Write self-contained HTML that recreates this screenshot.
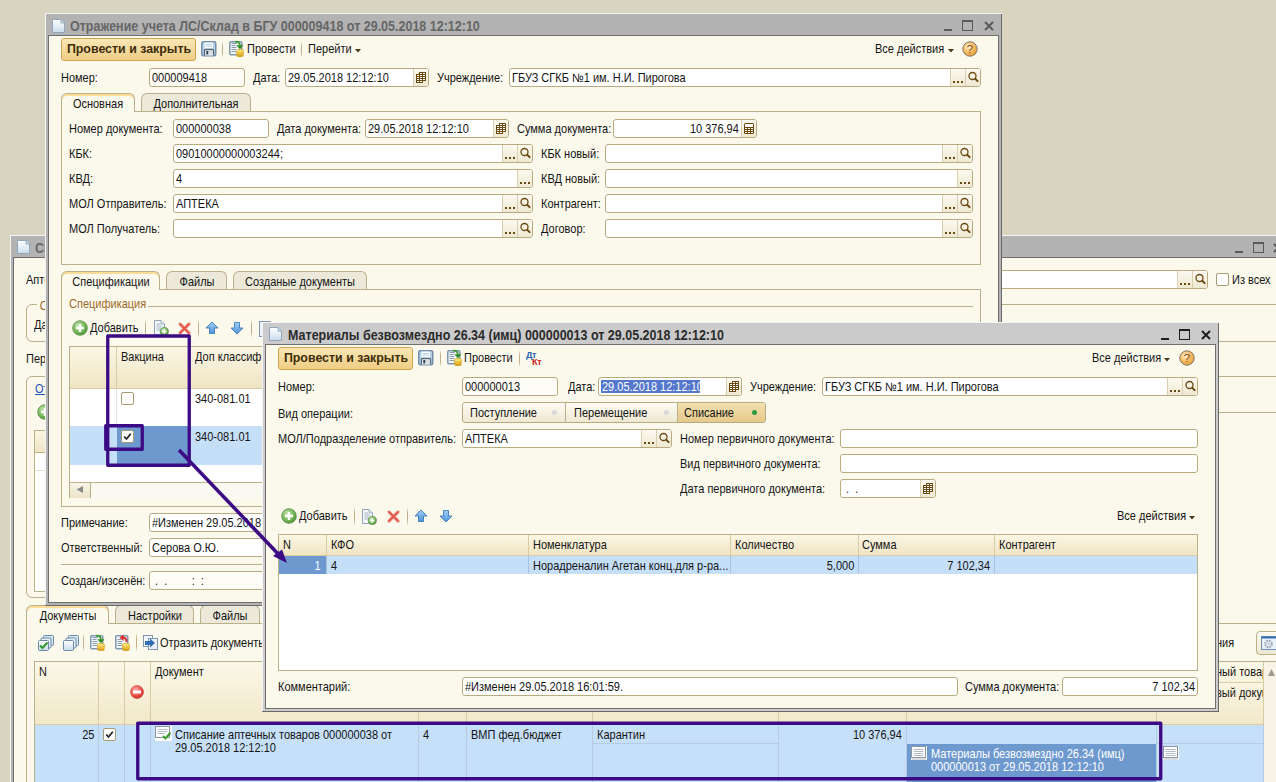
<!DOCTYPE html><html><head><meta charset="utf-8"><style>
*{margin:0;padding:0;box-sizing:content-box}
html,body{width:1276px;height:782px;overflow:hidden}
body{position:relative;background:#d9d4bf;font-family:"Liberation Sans",sans-serif;font-size:11px;color:#141414}
div,span,svg{position:absolute}
.t{line-height:13px;white-space:nowrap}
.fld{border:1px solid #b9ab80;border-radius:3px}
.fb{border-left:1px solid #d9cfae;background:linear-gradient(#fbf9f0,#efe9d3);height:17px}
.tab{border:1px solid #bab08a;border-bottom:none;border-radius:6px 6px 0 0;background:#ece9da}
.tab.act{background:#fbf9ec;box-shadow:inset 0 2px #fbdc98}
.pbtn{border:1px solid #cfa650;border-radius:3px;background:linear-gradient(#f9e7b6,#efcd84)}
.cb{width:11px;height:11px;border:1px solid #a89a72;border-radius:2px;background:#fff}
.radio{border:1px solid #b9ab80;border-radius:3px;background:linear-gradient(#fdfbf3,#eee8d2)}
.dot{width:5px;height:5px;border-radius:50%;background:#d8d8d8}
</style></head><body><svg width="0" height="0" style="position:absolute"><defs><linearGradient id="docg" x1="0" y1="0" x2="0" y2="1"><stop offset="0" stop-color="#ffffff"/><stop offset="1" stop-color="#c9dcec"/></linearGradient><radialGradient id="helpg" cx="0.4" cy="0.35" r="0.7"><stop offset="0" stop-color="#fff1d0"/><stop offset="0.6" stop-color="#f4b75a"/><stop offset="1" stop-color="#e39a3a"/></radialGradient><radialGradient id="addg" cx="0.4" cy="0.35" r="0.7"><stop offset="0" stop-color="#c8e8b0"/><stop offset="0.7" stop-color="#6cb04e"/><stop offset="1" stop-color="#4d8f37"/></radialGradient><radialGradient id="redg" cx="0.4" cy="0.35" r="0.7"><stop offset="0" stop-color="#ffb0a8"/><stop offset="0.7" stop-color="#e2463c"/><stop offset="1" stop-color="#c8302a"/></radialGradient><linearGradient id="arrg" x1="0" y1="0" x2="0" y2="1"><stop offset="0" stop-color="#9fd0f5"/><stop offset="1" stop-color="#4f93d9"/></linearGradient></defs></svg><div style="left:10px;top:235px;width:1291px;height:566px;background:#b3b3b3"></div>
<div style="left:10px;top:235px;width:1291px;height:1px;background:#f4f4f4"></div>
<div style="left:10px;top:235px;width:1px;height:566px;background:#f4f4f4"></div>
<div style="left:1300px;top:236px;width:1px;height:565px;background:#6a6a6a"></div>
<div style="left:10px;top:800px;width:1291px;height:1px;background:#6a6a6a"></div>
<div style="left:13px;top:257px;width:1285px;height:541px;background:#6f6f6f"></div>
<div style="left:14px;top:258px;width:1283px;height:539px;background:#fbf9ec"></div>
<svg style="left:17px;top:240px" width="13" height="14"><path d="M0.5 0.5 H9 L12.5 4 V13.5 H0.5 Z" fill="url(#docg)" stroke="#8fa6bd" stroke-width="1"/><path d="M9 0.5 V4 H12.5" fill="#cfe0ee" stroke="#8fa6bd" stroke-width="1"/></svg>
<span class="t" style="left:34.5px;top:242.36px;font-size:13.75px;line-height:13.75px;transform:scaleX(0.9091);transform-origin:0 0;font-weight:bold;color:#686868">Списание аптечных товаров</span>
<div style="left:1235px;top:251px;width:8px;height:2px;background:#5a5a5a"></div>
<div style="left:1253px;top:242px;width:9px;height:8px;border:1px solid #5a5a5a;border-top-width:2px"></div>
<svg style="left:1273px;top:243px" width="10" height="10"><path d="M1 1 L9 9 M9 1 L1 9" stroke="#5a5a5a" stroke-width="2"/></svg>
<span class="t" style="left:26px;top:273.76px;font-size:12.10px;line-height:12.10px;transform:scaleX(0.9091);transform-origin:0 0;">Аптека:</span>
<div class="fld" style="left:900px;top:270px;width:306px;height:17px;background:#fff"></div>
<div class="fb" style="left:1192px;top:271px;width:14px;height:17px;border-radius:0 2px 2px 0;"></div>
<svg style="left:1193px;top:271px" width="15" height="17"><circle cx="6.5" cy="7" r="3.5" fill="none" stroke="#6b4a12" stroke-width="1.3"/><path d="M9.2 9.7 L11.6 12.1" stroke="#6b4a12" stroke-width="2" stroke-linecap="round"/></svg>
<div class="fb" style="left:1177px;top:271px;width:14px;height:17px;"></div>
<div style="left:1180px;top:283px;width:2px;height:2px;background:#6b4a12;box-shadow:4px 0 #6b4a12,8px 0 #6b4a12"></div>
<div class="cb" style="left:1216px;top:273px"></div>
<span class="t" style="left:1232px;top:273.76px;font-size:12.10px;line-height:12.10px;transform:scaleX(0.9091);transform-origin:0 0;">Из всех</span>
<div style="left:26px;top:304px;width:1400px;height:36px;border:1px solid #bab08a;border-radius:6px"></div>
<span class="t" style="left:37px;top:299.76px;font-size:12.10px;line-height:12.10px;transform:scaleX(0.9091);transform-origin:0 0;color:#9b6a2b;background:#fbf9ec;padding:0 3px">Отбор</span>
<span class="t" style="left:34px;top:318.76px;font-size:12.10px;line-height:12.10px;transform:scaleX(0.9091);transform-origin:0 0;">Дата:</span>
<div style="left:1219px;top:341px;width:58px;height:1px;background:#bab08a"></div>
<span class="t" style="left:26px;top:352.76px;font-size:12.10px;line-height:12.10px;transform:scaleX(0.9091);transform-origin:0 0;">Период:</span>
<div style="left:26px;top:376px;width:1120px;height:220px;border:1px solid #bab08a;border-radius:6px"></div>
<div style="left:1219px;top:376px;width:58px;height:1px;background:#bab08a"></div>
<div style="left:1219px;top:412px;width:58px;height:1px;background:#bab08a"></div>
<span class="t" style="left:35px;top:382.76px;font-size:12.10px;line-height:12.10px;transform:scaleX(0.9091);transform-origin:0 0;color:#1f4fb8;text-decoration:underline">Отразить</span>
<svg style="left:37px;top:404px" width="16" height="16"><circle cx="8" cy="8" r="7.3" fill="url(#addg)" stroke="#5c8a4a" stroke-width="0.8"/><path d="M8 4 V12 M4 8 H12" stroke="#fff" stroke-width="2.4"/></svg>
<div style="left:34px;top:430px;width:1100px;height:160px;background:#fff;border:1px solid #bab08a"></div>
<div style="left:35px;top:431px;width:1100px;height:21px;background:linear-gradient(#fbf6e4,#efe5c4)"></div>
<div style="left:35px;top:452px;width:1096px;height:1px;background:#bab08a"></div>
<div style="left:35px;top:470px;width:1096px;height:1px;background:#e6e0cc"></div>
<div style="left:26px;top:623px;width:1400px;height:300px;border:1px solid #bab08a"></div>
<div class="tab act" style="left:26px;top:605px;width:81px;height:18px"></div>
<span class="t" style="left:67.5px;top:609.76px;font-size:12.10px;line-height:12.10px;transform:scaleX(0.9091) translateX(-50%);transform-origin:0 0;">Документы</span>
<div class="tab" style="left:115px;top:605px;width:77px;height:17px"></div>
<span class="t" style="left:154.5px;top:609.76px;font-size:12.10px;line-height:12.10px;transform:scaleX(0.9091) translateX(-50%);transform-origin:0 0;">Настройки</span>
<div class="tab" style="left:200px;top:605px;width:58px;height:17px"></div>
<span class="t" style="left:230.0px;top:609.76px;font-size:12.10px;line-height:12.10px;transform:scaleX(0.9091) translateX(-50%);transform-origin:0 0;">Файлы</span>
<svg style="left:38px;top:635px" width="16" height="16"><rect x="5.5" y="0.5" width="10" height="10" rx="1" fill="#d7e6f3" stroke="#6c8aa8"/><rect x="3" y="3" width="10" height="10" rx="1" fill="#e3eef8" stroke="#6c8aa8"/><rect x="0.5" y="5.5" width="10" height="10" rx="1" fill="url(#docg)" stroke="#6c8aa8"/><path d="M2 10.5 L4.5 13 L9.5 7.5" fill="none" stroke="#2f9a2a" stroke-width="2"/></svg>
<svg style="left:63px;top:635px" width="16" height="16"><rect x="5.5" y="0.5" width="10" height="10" rx="1" fill="#d7e6f3" stroke="#6c8aa8"/><rect x="3" y="3" width="10" height="10" rx="1" fill="#e3eef8" stroke="#6c8aa8"/><rect x="0.5" y="5.5" width="10" height="10" rx="1" fill="url(#docg)" stroke="#6c8aa8"/></svg>
<div style="left:83px;top:633px;width:1px;height:19px;background:linear-gradient(#fbf9ec,#bdb08a 30%,#bdb08a 70%,#fbf9ec)"></div>
<svg style="left:89px;top:634px" width="17" height="18"><rect x="1.75" y="1.75" width="12" height="13" rx="1" fill="#f1f6fb" stroke="#8199b0" stroke-width="1.5"/><path d="M3.5 3.5 H9 M3.5 5.5 H7.5 M3.5 7.5 H8.5 M3.5 9.5 H8 M3.5 11.5 H8" stroke="#8a9cad" stroke-width="1"/><path d="M7 1.8 C10 1 11.5 2.5 12 5.5" fill="none" stroke="#3f9a2f" stroke-width="1.8"/><path d="M8.3 5.3 H15.5 L11.9 9.2Z" fill="#2e8a22"/><ellipse cx="12" cy="15.2" rx="3.7" ry="1.9" fill="#dba42a"/><ellipse cx="12" cy="13.2" rx="3.7" ry="1.9" fill="#f2cd45" stroke="#d19a20" stroke-width="0.6"/><ellipse cx="12" cy="11.2" rx="3.7" ry="1.9" fill="#f8e06a" stroke="#d19a20" stroke-width="0.6"/></svg>
<svg style="left:114px;top:634px" width="17" height="18"><rect x="1.75" y="1.75" width="12" height="13" rx="1" fill="#f1f6fb" stroke="#8199b0" stroke-width="1.5"/><path d="M3.5 5.5 H7.5 M3.5 7.5 H8.5 M3.5 9.5 H8 M3.5 11.5 H8" stroke="#8a9cad" stroke-width="1"/><path d="M12.5 8 C12.5 5 11 3.5 8.5 3.5" fill="none" stroke="#d8302a" stroke-width="1.9"/><path d="M9.5 0.5 V7 L5.5 3.7Z" fill="#d8302a"/><ellipse cx="12" cy="15.2" rx="3.7" ry="1.9" fill="#dba42a"/><ellipse cx="12" cy="13.2" rx="3.7" ry="1.9" fill="#f2cd45" stroke="#d19a20" stroke-width="0.6"/><ellipse cx="12" cy="11.2" rx="3.7" ry="1.9" fill="#f8e06a" stroke="#d19a20" stroke-width="0.6"/></svg>
<div style="left:136px;top:633px;width:1px;height:19px;background:linear-gradient(#fbf9ec,#bdb08a 30%,#bdb08a 70%,#fbf9ec)"></div>
<svg style="left:143px;top:635px" width="16" height="16"><rect x="0.5" y="0.5" width="9" height="11" fill="#f3f7fb" stroke="#7f97ae"/><rect x="5.5" y="3.5" width="9" height="11" fill="#e9f0f7" stroke="#7f97ae"/><path d="M2 6 H7 V3.5 L12 8 L7 12.5 V10 H2Z" fill="#2f6db5"/></svg>
<span class="t" style="left:160px;top:636.76px;font-size:12.10px;line-height:12.10px;transform:scaleX(0.9091);transform-origin:0 0;">Отразить документы</span>
<span class="t" style="left:1216px;top:636.76px;font-size:12.10px;line-height:12.10px;transform:scaleX(0.9091);transform-origin:0 0;">ния</span>
<div style="left:1256px;top:631px;width:40px;height:22px;border:1px solid #bab08a;border-radius:4px;background:linear-gradient(#fdfbf2,#efe8d0)"></div>
<svg style="left:1261px;top:636px" width="16" height="14"><rect x="0.5" y="0.5" width="15" height="13" fill="#e9f2fb" stroke="#6f8fb5"/><rect x="0.5" y="0.5" width="15" height="2" fill="#3a6fb0"/><circle cx="7.5" cy="8" r="3.3" fill="none" stroke="#9aa3ad" stroke-width="2" stroke-dasharray="1.6 1"/><circle cx="7.5" cy="8" r="1.3" fill="#c8ced6"/></svg>
<div style="left:34px;top:661px;width:1300px;height:200px;background:#fff;border-top:1px solid #bab08a;border-left:1px solid #bab08a"></div>
<div style="left:35px;top:662px;width:1300px;height:62px;background:linear-gradient(#fcf8e8,#f1e8c9)"></div>
<div style="left:98px;top:662px;width:1px;height:121px;background:#d8cca6"></div>
<div style="left:124px;top:662px;width:1px;height:121px;background:#d8cca6"></div>
<div style="left:150px;top:662px;width:1px;height:121px;background:#d8cca6"></div>
<div style="left:418px;top:662px;width:1px;height:121px;background:#d8cca6"></div>
<div style="left:466px;top:662px;width:1px;height:121px;background:#d8cca6"></div>
<div style="left:592px;top:662px;width:1px;height:121px;background:#d8cca6"></div>
<div style="left:778px;top:662px;width:1px;height:121px;background:#d8cca6"></div>
<div style="left:906px;top:662px;width:1px;height:121px;background:#d8cca6"></div>
<div style="left:1156px;top:662px;width:1px;height:121px;background:#d8cca6"></div>
<div style="left:1263px;top:662px;width:1px;height:121px;background:#d8cca6"></div>
<div style="left:1264px;top:662px;width:20px;height:120px;background:#f7f4e7"></div>
<svg style="left:1267px;top:668px" width="9" height="9"><path d="M4.5 1 L8 8 H1Z" fill="#a09a8a"/></svg>
<div style="left:1157px;top:682px;width:107px;height:1px;background:#d8cca6"></div>
<div style="left:1157px;top:683px;width:106px;height:41px;background:linear-gradient(#faf5e3,#f1e8c9)"></div>
<span class="t" style="left:39px;top:665.76px;font-size:12.10px;line-height:12.10px;transform:scaleX(0.9091);transform-origin:0 0;">N</span>
<span class="t" style="left:155px;top:665.76px;font-size:12.10px;line-height:12.10px;transform:scaleX(0.9091);transform-origin:0 0;">Документ</span>
<svg style="left:130px;top:685px" width="14" height="14"><circle cx="7" cy="7" r="6.5" fill="url(#redg)" stroke="#c44" stroke-width="0.6"/><rect x="3" y="5.5" width="8" height="3" fill="#fff"/></svg>
<div style="left:1157px;top:662px;width:106px;height:60px;overflow:hidden"><span class="t" style="left:59px;top:3.76px;font-size:12.1px;line-height:12.1px;transform:scaleX(0.9091);transform-origin:0 0">ный товар</span><span class="t" style="left:59px;top:24.76px;font-size:12.1px;line-height:12.1px;transform:scaleX(0.9091);transform-origin:0 0">вый документ</span></div>
<div style="left:35px;top:724px;width:1228px;height:1px;background:#d8cca6"></div>
<div style="left:35px;top:725px;width:1228px;height:60px;background:#c7e0fa"></div>
<div style="left:98px;top:725px;width:1px;height:58px;background:#b4cbe3"></div>
<div style="left:124px;top:725px;width:1px;height:58px;background:#b4cbe3"></div>
<div style="left:150px;top:725px;width:1px;height:58px;background:#b4cbe3"></div>
<div style="left:418px;top:725px;width:1px;height:58px;background:#b4cbe3"></div>
<div style="left:466px;top:725px;width:1px;height:58px;background:#b4cbe3"></div>
<div style="left:592px;top:725px;width:1px;height:58px;background:#b4cbe3"></div>
<div style="left:778px;top:725px;width:1px;height:58px;background:#b4cbe3"></div>
<div style="left:906px;top:725px;width:1px;height:58px;background:#b4cbe3"></div>
<div style="left:1156px;top:725px;width:1px;height:58px;background:#b4cbe3"></div>
<div style="left:1263px;top:725px;width:1px;height:58px;background:#b4cbe3"></div>
<div style="left:592px;top:743px;width:187px;height:1px;background:#b4cbe3"></div>
<div style="left:1157px;top:743px;width:107px;height:1px;background:#b4cbe3"></div>
<span class="t" style="right:1182px;top:728.76px;font-size:12.10px;line-height:12.10px;transform:scaleX(0.9091);transform-origin:100% 0;">25</span>
<div class="cb" style="left:103px;top:728px"></div>
<svg style="left:103px;top:728px" width="13" height="13"><path d="M3.2 6.5 L5.5 9 L9.8 3.8" fill="none" stroke="#222" stroke-width="1.8"/></svg>
<svg style="left:155px;top:726px" width="17" height="15"><rect x="0" y="0" width="17" height="15" fill="#fff"/><rect x="0.5" y="0.5" width="14" height="11" fill="#fff" stroke="#8a97a3"/><path d="M2.5 3.5 H12.5 M2.5 5.5 H12.5 M2.5 7.5 H10" stroke="#a8b3bd" stroke-width="0.9"/><path d="M8 10 L10.5 12.5 L15.5 6.5" fill="none" stroke="#39a02f" stroke-width="2"/></svg>
<span class="t" style="left:175px;top:728.76px;font-size:12.10px;line-height:12.10px;transform:scaleX(0.9091);transform-origin:0 0;">Списание аптечных товаров 000000038 от</span>
<span class="t" style="left:175px;top:741.76px;font-size:12.10px;line-height:12.10px;transform:scaleX(0.9091);transform-origin:0 0;">29.05.2018 12:12:10</span>
<span class="t" style="left:423px;top:728.76px;font-size:12.10px;line-height:12.10px;transform:scaleX(0.9091);transform-origin:0 0;">4</span>
<span class="t" style="left:471px;top:728.76px;font-size:12.10px;line-height:12.10px;transform:scaleX(0.9091);transform-origin:0 0;">ВМП фед.бюджет</span>
<span class="t" style="left:597px;top:728.76px;font-size:12.10px;line-height:12.10px;transform:scaleX(0.9091);transform-origin:0 0;">Карантин</span>
<span class="t" style="right:374px;top:728.76px;font-size:12.10px;line-height:12.10px;transform:scaleX(0.9091);transform-origin:100% 0;">10 376,94</span>
<div style="left:907px;top:744px;width:249px;height:40px;background:#6e99cf"></div>
<svg style="left:911px;top:746px" width="16" height="14"><rect x="0" y="0" width="16" height="14" fill="#fff"/><rect x="0.5" y="0.5" width="14" height="11" fill="#fff" stroke="#8a97a3"/><path d="M2.5 3.5 H12.5 M2.5 5.5 H12.5 M2.5 7.5 H12.5 M2.5 9.5 H12.5" stroke="#a8b3bd" stroke-width="0.9"/><rect x="1" y="12" width="14" height="2" fill="#d9dde2"/></svg>
<span class="t" style="left:931px;top:747.76px;font-size:12.10px;line-height:12.10px;transform:scaleX(0.9091);transform-origin:0 0;color:#fff">Материалы безвозмездно 26.34 (имц)</span>
<span class="t" style="left:931px;top:760.76px;font-size:12.10px;line-height:12.10px;transform:scaleX(0.9091);transform-origin:0 0;color:#fff">000000013 от 29.05.2018 12:12:10</span>
<svg style="left:1163px;top:746px" width="16" height="14"><rect x="0" y="0" width="16" height="14" fill="#fff"/><rect x="0.5" y="0.5" width="14" height="11" fill="#fff" stroke="#8a97a3"/><path d="M2.5 3.5 H12.5 M2.5 5.5 H12.5 M2.5 7.5 H12.5 M2.5 9.5 H12.5" stroke="#a8b3bd" stroke-width="0.9"/><rect x="1" y="12" width="14" height="2" fill="#d9dde2"/></svg>
<div style="left:45px;top:13px;width:957px;height:593px;background:#b3b3b3"></div>
<div style="left:45px;top:13px;width:957px;height:1px;background:#f4f4f4"></div>
<div style="left:45px;top:13px;width:1px;height:593px;background:#f4f4f4"></div>
<div style="left:1001px;top:14px;width:1px;height:592px;background:#6a6a6a"></div>
<div style="left:45px;top:605px;width:957px;height:1px;background:#6a6a6a"></div>
<div style="left:48px;top:35px;width:951px;height:568px;background:#6f6f6f"></div>
<div style="left:49px;top:36px;width:949px;height:566px;background:#fbf9ec"></div>
<svg style="left:52px;top:19px" width="13" height="14"><path d="M0.5 0.5 H9 L12.5 4 V13.5 H0.5 Z" fill="url(#docg)" stroke="#8fa6bd" stroke-width="1"/><path d="M9 0.5 V4 H12.5" fill="#cfe0ee" stroke="#8fa6bd" stroke-width="1"/></svg>
<span class="t" style="left:70px;top:20.36px;font-size:13.75px;line-height:13.75px;transform:scaleX(0.9091);transform-origin:0 0;font-weight:bold;color:#666">Отражение учета ЛС/Склад в БГУ 000009418 от 29.05.2018 12:12:10</span>
<div style="left:944px;top:29px;width:8px;height:2px;background:#5a5a5a"></div>
<div style="left:962px;top:20px;width:9px;height:8px;border:1px solid #5a5a5a;border-top-width:2px"></div>
<svg style="left:984px;top:21px" width="10" height="10"><path d="M1 1 L9 9 M9 1 L1 9" stroke="#5a5a5a" stroke-width="2"/></svg>
<div class="pbtn" style="left:61px;top:38px;width:133px;height:21px"></div>
<span class="t" style="left:128.5px;top:41.85px;font-size:13.64px;line-height:13.64px;transform:scaleX(0.9091) translateX(-50%);transform-origin:0 0;font-weight:bold;color:#3d2d0a">Провести и закрыть</span>
<svg style="left:201px;top:41px" width="16" height="16"><rect x="0.75" y="0.75" width="14" height="14" rx="1.5" fill="#b5d0e6" stroke="#7590aa" stroke-width="1.5"/><rect x="3.5" y="1.5" width="8.5" height="6" fill="#fdfeff"/><path d="M4.5 3.5 H11 M4.5 5.3 H11" stroke="#a5cddc" stroke-width="0.9"/><path d="M3.5 14.5 V9.5 Q3.5 8.5 4.5 8.5 H11.5 Q12.5 8.5 12.5 9.5 V14.5" fill="#f2f4f6" stroke="#55687a" stroke-width="1.3"/><rect x="5.3" y="10" width="2" height="3.5" fill="#2f3f50"/><rect x="8" y="10" width="3.5" height="3.5" fill="#d8dde2"/></svg>
<div style="left:222px;top:41px;width:1px;height:17px;background:linear-gradient(#fbf9ec,#bdb08a 30%,#bdb08a 70%,#fbf9ec)"></div>
<svg style="left:228px;top:40px" width="17" height="18"><rect x="1.75" y="1.75" width="12" height="13" rx="1" fill="#f1f6fb" stroke="#8199b0" stroke-width="1.5"/><path d="M3.5 3.5 H9 M3.5 5.5 H7.5 M3.5 7.5 H8.5 M3.5 9.5 H8 M3.5 11.5 H8" stroke="#8a9cad" stroke-width="1"/><path d="M7 1.8 C10 1 11.5 2.5 12 5.5" fill="none" stroke="#3f9a2f" stroke-width="1.8"/><path d="M8.3 5.3 H15.5 L11.9 9.2Z" fill="#2e8a22"/><ellipse cx="12" cy="15.2" rx="3.7" ry="1.9" fill="#dba42a"/><ellipse cx="12" cy="13.2" rx="3.7" ry="1.9" fill="#f2cd45" stroke="#d19a20" stroke-width="0.6"/><ellipse cx="12" cy="11.2" rx="3.7" ry="1.9" fill="#f8e06a" stroke="#d19a20" stroke-width="0.6"/></svg>
<span class="t" style="left:247px;top:42.76px;font-size:12.10px;line-height:12.10px;transform:scaleX(0.9091);transform-origin:0 0;">Провести</span>
<div style="left:301px;top:41px;width:1px;height:17px;background:linear-gradient(#fbf9ec,#bdb08a 30%,#bdb08a 70%,#fbf9ec)"></div>
<span class="t" style="left:308px;top:42.76px;font-size:12.10px;line-height:12.10px;transform:scaleX(0.9091);transform-origin:0 0;">Перейти</span>
<svg style="left:355px;top:49px" width="6" height="4"><path d="M0 0 H6 L3 3.5Z" fill="#4a3a18"/></svg>
<span class="t" style="left:875px;top:42.76px;font-size:12.10px;line-height:12.10px;transform:scaleX(0.9091);transform-origin:0 0;">Все действия</span>
<svg style="left:948px;top:49px" width="6" height="4"><path d="M0 0 H6 L3 3.5Z" fill="#4a3a18"/></svg>
<svg style="left:962px;top:41px" width="16" height="16"><circle cx="8" cy="8" r="7.2" fill="url(#helpg)" stroke="#857565" stroke-width="1"/><text x="8" y="12" text-anchor="middle" font-family="Liberation Sans" font-size="11.5" fill="#7a4424">?</text></svg>
<span class="t" style="left:61px;top:71.76px;font-size:12.10px;line-height:12.10px;transform:scaleX(0.9091);transform-origin:0 0;">Номер:</span>
<div class="fld" style="left:149px;top:68px;width:94px;height:17px;background:#fdfcf6"></div>
<span class="t" style="left:152px;top:71.76px;font-size:12.10px;line-height:12.10px;transform:scaleX(0.9091);transform-origin:0 0;">000009418</span>
<span class="t" style="left:253px;top:71.76px;font-size:12.10px;line-height:12.10px;transform:scaleX(0.9091);transform-origin:0 0;">Дата:</span>
<div class="fld" style="left:285px;top:68px;width:142px;height:17px;background:#fff"></div>
<div class="fb" style="left:413px;top:69px;width:14px;height:17px;border-radius:0 2px 2px 0;"></div>
<svg style="left:416px;top:72px" width="10" height="11" shape-rendering="crispEdges"><rect x="3" y="0" width="4" height="3" fill="#6b4a12"/><rect x="6" y="0" width="4" height="3" fill="#6b4a12"/><rect x="0" y="2" width="4" height="3" fill="#6b4a12"/><rect x="3" y="2" width="4" height="3" fill="#6b4a12"/><rect x="6" y="2" width="4" height="3" fill="#6b4a12"/><rect x="0" y="4" width="4" height="3" fill="#6b4a12"/><rect x="3" y="4" width="4" height="3" fill="#6b4a12"/><rect x="6" y="4" width="4" height="3" fill="#6b4a12"/><rect x="0" y="6" width="4" height="3" fill="#6b4a12"/><rect x="3" y="6" width="4" height="3" fill="#6b4a12"/><rect x="6" y="6" width="4" height="3" fill="#6b4a12"/><rect x="0" y="8" width="4" height="3" fill="#6b4a12"/><rect x="3" y="8" width="4" height="3" fill="#6b4a12"/><rect x="4" y="1" width="2" height="1" fill="#fff"/><rect x="7" y="1" width="2" height="1" fill="#fff"/><rect x="1" y="3" width="2" height="1" fill="#fff"/><rect x="4" y="3" width="2" height="1" fill="#fff"/><rect x="7" y="3" width="2" height="1" fill="#fff"/><rect x="1" y="5" width="2" height="1" fill="#fff"/><rect x="4" y="5" width="2" height="1" fill="#fff"/><rect x="7" y="5" width="2" height="1" fill="#fff"/><rect x="1" y="7" width="2" height="1" fill="#fff"/><rect x="4" y="7" width="2" height="1" fill="#fff"/><rect x="7" y="7" width="2" height="1" fill="#fff"/><rect x="1" y="9" width="2" height="1" fill="#fff"/><rect x="4" y="9" width="2" height="1" fill="#fff"/></svg>
<span class="t" style="left:288px;top:71.76px;font-size:12.10px;line-height:12.10px;transform:scaleX(0.9091);transform-origin:0 0;">29.05.2018 12:12:10</span>
<span class="t" style="left:437px;top:71.76px;font-size:12.10px;line-height:12.10px;transform:scaleX(0.9091);transform-origin:0 0;">Учреждение:</span>
<div class="fld" style="left:509px;top:68px;width:470px;height:17px;background:#fff"></div>
<div class="fb" style="left:965px;top:69px;width:14px;height:17px;border-radius:0 2px 2px 0;"></div>
<svg style="left:966px;top:69px" width="15" height="17"><circle cx="6.5" cy="7" r="3.5" fill="none" stroke="#6b4a12" stroke-width="1.3"/><path d="M9.2 9.7 L11.6 12.1" stroke="#6b4a12" stroke-width="2" stroke-linecap="round"/></svg>
<div class="fb" style="left:950px;top:69px;width:14px;height:17px;"></div>
<div style="left:953px;top:81px;width:2px;height:2px;background:#6b4a12;box-shadow:4px 0 #6b4a12,8px 0 #6b4a12"></div>
<span class="t" style="left:512px;top:71.76px;font-size:12.10px;line-height:12.10px;transform:scaleX(0.9091);transform-origin:0 0;">ГБУЗ СГКБ №1 им. Н.И. Пирогова</span>
<div style="left:61px;top:111px;width:918px;height:152px;border:1px solid #bab08a"></div>
<div class="tab act" style="left:61px;top:93px;width:72px;height:18px"></div>
<span class="t" style="left:98.0px;top:97.76px;font-size:12.10px;line-height:12.10px;transform:scaleX(0.9091) translateX(-50%);transform-origin:0 0;">Основная</span>
<div class="tab" style="left:141px;top:93px;width:108px;height:17px"></div>
<span class="t" style="left:196.0px;top:97.76px;font-size:12.10px;line-height:12.10px;transform:scaleX(0.9091) translateX(-50%);transform-origin:0 0;">Дополнительная</span>
<span class="t" style="left:69px;top:122.76px;font-size:12.10px;line-height:12.10px;transform:scaleX(0.9091);transform-origin:0 0;">Номер документа:</span>
<div class="fld" style="left:173px;top:119px;width:94px;height:17px;background:#fff"></div>
<span class="t" style="left:176px;top:122.76px;font-size:12.10px;line-height:12.10px;transform:scaleX(0.9091);transform-origin:0 0;">000000038</span>
<span class="t" style="left:277px;top:122.76px;font-size:12.10px;line-height:12.10px;transform:scaleX(0.9091);transform-origin:0 0;">Дата документа:</span>
<div class="fld" style="left:365px;top:119px;width:142px;height:17px;background:#fff"></div>
<div class="fb" style="left:493px;top:120px;width:14px;height:17px;border-radius:0 2px 2px 0;"></div>
<svg style="left:496px;top:123px" width="10" height="11" shape-rendering="crispEdges"><rect x="3" y="0" width="4" height="3" fill="#6b4a12"/><rect x="6" y="0" width="4" height="3" fill="#6b4a12"/><rect x="0" y="2" width="4" height="3" fill="#6b4a12"/><rect x="3" y="2" width="4" height="3" fill="#6b4a12"/><rect x="6" y="2" width="4" height="3" fill="#6b4a12"/><rect x="0" y="4" width="4" height="3" fill="#6b4a12"/><rect x="3" y="4" width="4" height="3" fill="#6b4a12"/><rect x="6" y="4" width="4" height="3" fill="#6b4a12"/><rect x="0" y="6" width="4" height="3" fill="#6b4a12"/><rect x="3" y="6" width="4" height="3" fill="#6b4a12"/><rect x="6" y="6" width="4" height="3" fill="#6b4a12"/><rect x="0" y="8" width="4" height="3" fill="#6b4a12"/><rect x="3" y="8" width="4" height="3" fill="#6b4a12"/><rect x="4" y="1" width="2" height="1" fill="#fff"/><rect x="7" y="1" width="2" height="1" fill="#fff"/><rect x="1" y="3" width="2" height="1" fill="#fff"/><rect x="4" y="3" width="2" height="1" fill="#fff"/><rect x="7" y="3" width="2" height="1" fill="#fff"/><rect x="1" y="5" width="2" height="1" fill="#fff"/><rect x="4" y="5" width="2" height="1" fill="#fff"/><rect x="7" y="5" width="2" height="1" fill="#fff"/><rect x="1" y="7" width="2" height="1" fill="#fff"/><rect x="4" y="7" width="2" height="1" fill="#fff"/><rect x="7" y="7" width="2" height="1" fill="#fff"/><rect x="1" y="9" width="2" height="1" fill="#fff"/><rect x="4" y="9" width="2" height="1" fill="#fff"/></svg>
<span class="t" style="left:368px;top:122.76px;font-size:12.10px;line-height:12.10px;transform:scaleX(0.9091);transform-origin:0 0;">29.05.2018 12:12:10</span>
<span class="t" style="left:517px;top:122.76px;font-size:12.10px;line-height:12.10px;transform:scaleX(0.9091);transform-origin:0 0;">Сумма документа:</span>
<div class="fld" style="left:613px;top:119px;width:142px;height:17px;background:#fff"></div>
<div class="fb" style="left:741px;top:120px;width:14px;height:17px;border-radius:0 2px 2px 0;"></div>
<svg style="left:744px;top:123px" width="10" height="11" shape-rendering="crispEdges"><rect x="0" y="0" width="10" height="11" rx="1.5" fill="#6b4a12" shape-rendering="geometricPrecision"/><rect x="1" y="1" width="8" height="3" fill="#fff"/><rect x="1" y="5" width="2" height="1" fill="#fff"/><rect x="4" y="5" width="2" height="1" fill="#fff"/><rect x="7" y="5" width="2" height="1" fill="#fff"/><rect x="1" y="7" width="2" height="1" fill="#fff"/><rect x="4" y="7" width="2" height="1" fill="#fff"/><rect x="7" y="7" width="2" height="1" fill="#fff"/><rect x="1" y="9" width="2" height="1" fill="#fff"/><rect x="4" y="9" width="2" height="1" fill="#fff"/><rect x="7" y="9" width="2" height="1" fill="#fff"/></svg>
<span class="t" style="right:537px;top:122.76px;font-size:12.10px;line-height:12.10px;transform:scaleX(0.9091);transform-origin:100% 0;">10 376,94</span>
<span class="t" style="left:69px;top:147.76px;font-size:12.10px;line-height:12.10px;transform:scaleX(0.9091);transform-origin:0 0;">КБК:</span>
<div class="fld" style="left:173px;top:144px;width:358px;height:17px;background:#fff"></div>
<div class="fb" style="left:517px;top:145px;width:14px;height:17px;border-radius:0 2px 2px 0;"></div>
<svg style="left:518px;top:145px" width="15" height="17"><circle cx="6.5" cy="7" r="3.5" fill="none" stroke="#6b4a12" stroke-width="1.3"/><path d="M9.2 9.7 L11.6 12.1" stroke="#6b4a12" stroke-width="2" stroke-linecap="round"/></svg>
<div class="fb" style="left:502px;top:145px;width:14px;height:17px;"></div>
<div style="left:505px;top:157px;width:2px;height:2px;background:#6b4a12;box-shadow:4px 0 #6b4a12,8px 0 #6b4a12"></div>
<span class="t" style="left:176px;top:147.76px;font-size:12.10px;line-height:12.10px;transform:scaleX(0.9091);transform-origin:0 0;">09010000000003244;</span>
<span class="t" style="left:541px;top:147.76px;font-size:12.10px;line-height:12.10px;transform:scaleX(0.9091);transform-origin:0 0;">КБК новый:</span>
<div class="fld" style="left:605px;top:144px;width:366px;height:17px;background:#fff"></div>
<div class="fb" style="left:957px;top:145px;width:14px;height:17px;border-radius:0 2px 2px 0;"></div>
<svg style="left:958px;top:145px" width="15" height="17"><circle cx="6.5" cy="7" r="3.5" fill="none" stroke="#6b4a12" stroke-width="1.3"/><path d="M9.2 9.7 L11.6 12.1" stroke="#6b4a12" stroke-width="2" stroke-linecap="round"/></svg>
<div class="fb" style="left:942px;top:145px;width:14px;height:17px;"></div>
<div style="left:945px;top:157px;width:2px;height:2px;background:#6b4a12;box-shadow:4px 0 #6b4a12,8px 0 #6b4a12"></div>
<span class="t" style="left:69px;top:172.76px;font-size:12.10px;line-height:12.10px;transform:scaleX(0.9091);transform-origin:0 0;">КВД:</span>
<div class="fld" style="left:173px;top:169px;width:358px;height:17px;background:#fff"></div>
<div class="fb" style="left:517px;top:170px;width:14px;height:17px;border-radius:0 2px 2px 0;"></div>
<div style="left:520px;top:182px;width:2px;height:2px;background:#6b4a12;box-shadow:4px 0 #6b4a12,8px 0 #6b4a12"></div>
<span class="t" style="left:176px;top:172.76px;font-size:12.10px;line-height:12.10px;transform:scaleX(0.9091);transform-origin:0 0;">4</span>
<span class="t" style="left:541px;top:172.76px;font-size:12.10px;line-height:12.10px;transform:scaleX(0.9091);transform-origin:0 0;">КВД новый:</span>
<div class="fld" style="left:605px;top:169px;width:366px;height:17px;background:#fff"></div>
<div class="fb" style="left:957px;top:170px;width:14px;height:17px;border-radius:0 2px 2px 0;"></div>
<div style="left:960px;top:182px;width:2px;height:2px;background:#6b4a12;box-shadow:4px 0 #6b4a12,8px 0 #6b4a12"></div>
<span class="t" style="left:69px;top:197.76px;font-size:12.10px;line-height:12.10px;transform:scaleX(0.9091);transform-origin:0 0;">МОЛ Отправитель:</span>
<div class="fld" style="left:173px;top:194px;width:358px;height:17px;background:#fff"></div>
<div class="fb" style="left:517px;top:195px;width:14px;height:17px;border-radius:0 2px 2px 0;"></div>
<svg style="left:518px;top:195px" width="15" height="17"><circle cx="6.5" cy="7" r="3.5" fill="none" stroke="#6b4a12" stroke-width="1.3"/><path d="M9.2 9.7 L11.6 12.1" stroke="#6b4a12" stroke-width="2" stroke-linecap="round"/></svg>
<div class="fb" style="left:502px;top:195px;width:14px;height:17px;"></div>
<div style="left:505px;top:207px;width:2px;height:2px;background:#6b4a12;box-shadow:4px 0 #6b4a12,8px 0 #6b4a12"></div>
<span class="t" style="left:176px;top:197.76px;font-size:12.10px;line-height:12.10px;transform:scaleX(0.9091);transform-origin:0 0;">АПТЕКА</span>
<span class="t" style="left:541px;top:197.76px;font-size:12.10px;line-height:12.10px;transform:scaleX(0.9091);transform-origin:0 0;">Контрагент:</span>
<div class="fld" style="left:605px;top:194px;width:366px;height:17px;background:#fff"></div>
<div class="fb" style="left:957px;top:195px;width:14px;height:17px;border-radius:0 2px 2px 0;"></div>
<svg style="left:958px;top:195px" width="15" height="17"><circle cx="6.5" cy="7" r="3.5" fill="none" stroke="#6b4a12" stroke-width="1.3"/><path d="M9.2 9.7 L11.6 12.1" stroke="#6b4a12" stroke-width="2" stroke-linecap="round"/></svg>
<div class="fb" style="left:942px;top:195px;width:14px;height:17px;"></div>
<div style="left:945px;top:207px;width:2px;height:2px;background:#6b4a12;box-shadow:4px 0 #6b4a12,8px 0 #6b4a12"></div>
<span class="t" style="left:69px;top:222.76px;font-size:12.10px;line-height:12.10px;transform:scaleX(0.9091);transform-origin:0 0;">МОЛ Получатель:</span>
<div class="fld" style="left:173px;top:219px;width:358px;height:17px;background:#fff"></div>
<div class="fb" style="left:517px;top:220px;width:14px;height:17px;border-radius:0 2px 2px 0;"></div>
<svg style="left:518px;top:220px" width="15" height="17"><circle cx="6.5" cy="7" r="3.5" fill="none" stroke="#6b4a12" stroke-width="1.3"/><path d="M9.2 9.7 L11.6 12.1" stroke="#6b4a12" stroke-width="2" stroke-linecap="round"/></svg>
<div class="fb" style="left:502px;top:220px;width:14px;height:17px;"></div>
<div style="left:505px;top:232px;width:2px;height:2px;background:#6b4a12;box-shadow:4px 0 #6b4a12,8px 0 #6b4a12"></div>
<span class="t" style="left:541px;top:222.76px;font-size:12.10px;line-height:12.10px;transform:scaleX(0.9091);transform-origin:0 0;">Договор:</span>
<div class="fld" style="left:605px;top:219px;width:366px;height:17px;background:#fff"></div>
<div class="fb" style="left:957px;top:220px;width:14px;height:17px;border-radius:0 2px 2px 0;"></div>
<svg style="left:958px;top:220px" width="15" height="17"><circle cx="6.5" cy="7" r="3.5" fill="none" stroke="#6b4a12" stroke-width="1.3"/><path d="M9.2 9.7 L11.6 12.1" stroke="#6b4a12" stroke-width="2" stroke-linecap="round"/></svg>
<div class="fb" style="left:942px;top:220px;width:14px;height:17px;"></div>
<div style="left:945px;top:232px;width:2px;height:2px;background:#6b4a12;box-shadow:4px 0 #6b4a12,8px 0 #6b4a12"></div>
<div style="left:61px;top:289px;width:918px;height:216px;border:1px solid #bab08a"></div>
<div class="tab act" style="left:61px;top:271px;width:97px;height:18px"></div>
<span class="t" style="left:110.5px;top:275.76px;font-size:12.10px;line-height:12.10px;transform:scaleX(0.9091) translateX(-50%);transform-origin:0 0;">Спецификации</span>
<div class="tab" style="left:166px;top:271px;width:59px;height:17px"></div>
<span class="t" style="left:196.5px;top:275.76px;font-size:12.10px;line-height:12.10px;transform:scaleX(0.9091) translateX(-50%);transform-origin:0 0;">Файлы</span>
<div class="tab" style="left:233px;top:271px;width:132px;height:17px"></div>
<span class="t" style="left:300.0px;top:275.76px;font-size:12.10px;line-height:12.10px;transform:scaleX(0.9091) translateX(-50%);transform-origin:0 0;">Созданые документы</span>
<span class="t" style="left:69px;top:297.76px;font-size:12.10px;line-height:12.10px;transform:scaleX(0.9091);transform-origin:0 0;color:#9b6a2b">Спецификация</span>
<div style="left:148px;top:306px;width:825px;height:1px;background:#bab08a"></div>
<svg style="left:72px;top:320px" width="16" height="16"><circle cx="8" cy="8" r="7.3" fill="url(#addg)" stroke="#5c8a4a" stroke-width="0.8"/><path d="M8 4 V12 M4 8 H12" stroke="#fff" stroke-width="2.4"/></svg>
<span class="t" style="left:90px;top:321.76px;font-size:12.10px;line-height:12.10px;transform:scaleX(0.9091);transform-origin:0 0;">Добавить</span>
<div style="left:145px;top:319px;width:1px;height:19px;background:linear-gradient(#fbf9ec,#bdb08a 30%,#bdb08a 70%,#fbf9ec)"></div>
<svg style="left:153px;top:320px" width="16" height="16"><path d="M1.5 0.5 H8 L11.5 4 V14.5 H1.5Z" fill="#f4f8fb" stroke="#8ea3b8"/><path d="M8 0.5 V4 H11.5" fill="#dfe8f0" stroke="#8ea3b8" stroke-width="0.8"/><path d="M3.5 4 H7 M3.5 6 H9 M3.5 8 H8 M3.5 10 H7" stroke="#9fb0c0" stroke-width="0.9"/><circle cx="11.3" cy="11.5" r="4.1" fill="url(#addg)" stroke="#5c8a4a" stroke-width="0.7"/><path d="M11.3 9.2 V13.8 M9 11.5 H13.6" stroke="#fff" stroke-width="1.5"/></svg>
<svg style="left:178px;top:322px" width="13" height="13"><path d="M2 2 L11 11 M11 2 L2 11" stroke="#f3a89c" stroke-width="3.2" stroke-linecap="round"/><path d="M2 2 L11 11 M11 2 L2 11" stroke="#e0584a" stroke-width="1.8" stroke-linecap="round"/></svg>
<div style="left:198px;top:319px;width:1px;height:19px;background:linear-gradient(#fbf9ec,#bdb08a 30%,#bdb08a 70%,#fbf9ec)"></div>
<svg style="left:205px;top:321px" width="14" height="14"><path d="M7 1 L13 7 H9.5 V12.5 H4.5 V7 H1 Z" fill="url(#arrg)" stroke="#3f79b8" stroke-width="0.9"/></svg>
<svg style="left:230px;top:321px" width="14" height="14"><path d="M7 13 L13 7 H9.5 V1.5 H4.5 V7 H1 Z" fill="url(#arrg)" stroke="#3f79b8" stroke-width="0.9"/></svg>
<div style="left:251px;top:319px;width:1px;height:19px;background:linear-gradient(#fbf9ec,#bdb08a 30%,#bdb08a 70%,#fbf9ec)"></div>
<div style="left:259px;top:321px;width:10px;height:14px;border:1px solid #7f97ae;background:#eef4fa"></div>
<div style="left:69px;top:346px;width:900px;height:150px;background:#fff;border:1px solid #bab08a"></div>
<div style="left:70px;top:347px;width:900px;height:41px;background:linear-gradient(#fbf6e4,#efe5c4)"></div>
<div style="left:70px;top:388px;width:193px;height:1px;background:#d8cca6"></div>
<div style="left:116px;top:347px;width:1px;height:41px;background:#d8cca6"></div>
<div style="left:116px;top:389px;width:1px;height:37px;background:#dde3ea"></div>
<div style="left:116px;top:426px;width:1px;height:39px;background:#b9cde3"></div>
<div style="left:188px;top:347px;width:1px;height:41px;background:#d8cca6"></div>
<span class="t" style="left:121px;top:350.76px;font-size:12.10px;line-height:12.10px;transform:scaleX(0.9091);transform-origin:0 0;">Вакцина</span>
<span class="t" style="left:195px;top:350.76px;font-size:12.10px;line-height:12.10px;transform:scaleX(0.9091);transform-origin:0 0;">Доп классиф</span>
<div class="cb" style="left:121px;top:392px"></div>
<span class="t" style="left:195px;top:392.76px;font-size:12.10px;line-height:12.10px;transform:scaleX(0.9091);transform-origin:0 0;">340-081.01</span>
<div style="left:70px;top:426px;width:900px;height:39px;background:#c6dff9"></div>
<div style="left:117px;top:426px;width:71px;height:39px;background:#6e99cf"></div>
<div class="cb" style="left:121px;top:430px"></div>
<svg style="left:121px;top:430px" width="13" height="13"><path d="M3.2 6.5 L5.5 9 L9.8 3.8" fill="none" stroke="#222" stroke-width="1.8"/></svg>
<span class="t" style="left:195px;top:430.76px;font-size:12.10px;line-height:12.10px;transform:scaleX(0.9091);transform-origin:0 0;">340-081.01</span>
<div style="left:70px;top:482px;width:900px;height:15px;background:#f9f8f1;border-top:1px solid #bab08a"></div>
<div style="left:70px;top:483px;width:20px;height:15px;background:linear-gradient(#f8f5e8,#ebe3c8);border-right:1px solid #bab08a"></div>
<svg style="left:75px;top:485px" width="10" height="10"><path d="M8 1 V8 L1.5 4.5Z" fill="#8a8a88"/></svg>
<span class="t" style="left:61px;top:516.76px;font-size:12.10px;line-height:12.10px;transform:scaleX(0.9091);transform-origin:0 0;">Примечание:</span>
<div class="fld" style="left:149px;top:513px;width:750px;height:17px;background:#fff"></div>
<span class="t" style="left:152px;top:516.76px;font-size:12.10px;line-height:12.10px;transform:scaleX(0.9091);transform-origin:0 0;">#Изменен 29.05.2018 16:01:59.</span>
<span class="t" style="left:61px;top:541.76px;font-size:12.10px;line-height:12.10px;transform:scaleX(0.9091);transform-origin:0 0;">Ответственный:</span>
<div class="fld" style="left:149px;top:538px;width:750px;height:17px;background:#fff"></div>
<span class="t" style="left:152px;top:541.76px;font-size:12.10px;line-height:12.10px;transform:scaleX(0.9091);transform-origin:0 0;">Серова О.Ю.</span>
<div style="left:61px;top:564px;width:920px;height:1px;background:#bab08a"></div>
<span class="t" style="left:61px;top:574.76px;font-size:12.10px;line-height:12.10px;transform:scaleX(0.9091);transform-origin:0 0;">Создан/изсенён:</span>
<div class="fld" style="left:149px;top:571px;width:750px;height:17px;background:#fdfcf6"></div>
<span class="t" style="left:152px;top:574.76px;font-size:12.10px;line-height:12.10px;transform:scaleX(0.9091);transform-origin:0 0;">&nbsp;.&nbsp;&nbsp;.&nbsp;&nbsp;&nbsp;&nbsp;&nbsp;&nbsp;&nbsp;&nbsp;:&nbsp;&nbsp;:</span>
<div style="left:262px;top:322px;width:957px;height:390px;background:#cbcbcb"></div>
<div style="left:262px;top:322px;width:957px;height:1px;background:#f4f4f4"></div>
<div style="left:262px;top:322px;width:1px;height:390px;background:#f4f4f4"></div>
<div style="left:1218px;top:323px;width:1px;height:389px;background:#6a6a6a"></div>
<div style="left:262px;top:711px;width:957px;height:1px;background:#6a6a6a"></div>
<div style="left:265px;top:344px;width:951px;height:365px;background:#6f6f6f"></div>
<div style="left:266px;top:345px;width:949px;height:363px;background:#fbf9ec"></div>
<svg style="left:269px;top:327px" width="13" height="14"><path d="M0.5 0.5 H9 L12.5 4 V13.5 H0.5 Z" fill="url(#docg)" stroke="#8fa6bd" stroke-width="1"/><path d="M9 0.5 V4 H12.5" fill="#cfe0ee" stroke="#8fa6bd" stroke-width="1"/></svg>
<span class="t" style="left:288px;top:329.36px;font-size:13.75px;line-height:13.75px;transform:scaleX(0.9091);transform-origin:0 0;font-weight:bold;color:#2b2b2b">Материалы безвозмездно 26.34 (имц) 000000013 от 29.05.2018 12:12:10</span>
<div style="left:1161px;top:338px;width:8px;height:2px;background:#1e1e1e"></div>
<div style="left:1179px;top:329px;width:9px;height:8px;border:1px solid #1e1e1e;border-top-width:2px"></div>
<svg style="left:1201px;top:330px" width="10" height="10"><path d="M1 1 L9 9 M9 1 L1 9" stroke="#1e1e1e" stroke-width="2"/></svg>
<div class="pbtn" style="left:278px;top:347px;width:133px;height:21px"></div>
<span class="t" style="left:345.5px;top:350.85px;font-size:13.64px;line-height:13.64px;transform:scaleX(0.9091) translateX(-50%);transform-origin:0 0;font-weight:bold;color:#3d2d0a">Провести и закрыть</span>
<svg style="left:418px;top:350px" width="16" height="16"><rect x="0.75" y="0.75" width="14" height="14" rx="1.5" fill="#b5d0e6" stroke="#7590aa" stroke-width="1.5"/><rect x="3.5" y="1.5" width="8.5" height="6" fill="#fdfeff"/><path d="M4.5 3.5 H11 M4.5 5.3 H11" stroke="#a5cddc" stroke-width="0.9"/><path d="M3.5 14.5 V9.5 Q3.5 8.5 4.5 8.5 H11.5 Q12.5 8.5 12.5 9.5 V14.5" fill="#f2f4f6" stroke="#55687a" stroke-width="1.3"/><rect x="5.3" y="10" width="2" height="3.5" fill="#2f3f50"/><rect x="8" y="10" width="3.5" height="3.5" fill="#d8dde2"/></svg>
<div style="left:440px;top:350px;width:1px;height:17px;background:linear-gradient(#fbf9ec,#bdb08a 30%,#bdb08a 70%,#fbf9ec)"></div>
<svg style="left:446px;top:349px" width="17" height="18"><rect x="1.75" y="1.75" width="12" height="13" rx="1" fill="#f1f6fb" stroke="#8199b0" stroke-width="1.5"/><path d="M3.5 3.5 H9 M3.5 5.5 H7.5 M3.5 7.5 H8.5 M3.5 9.5 H8 M3.5 11.5 H8" stroke="#8a9cad" stroke-width="1"/><path d="M7 1.8 C10 1 11.5 2.5 12 5.5" fill="none" stroke="#3f9a2f" stroke-width="1.8"/><path d="M8.3 5.3 H15.5 L11.9 9.2Z" fill="#2e8a22"/><ellipse cx="12" cy="15.2" rx="3.7" ry="1.9" fill="#dba42a"/><ellipse cx="12" cy="13.2" rx="3.7" ry="1.9" fill="#f2cd45" stroke="#d19a20" stroke-width="0.6"/><ellipse cx="12" cy="11.2" rx="3.7" ry="1.9" fill="#f8e06a" stroke="#d19a20" stroke-width="0.6"/></svg>
<span class="t" style="left:464px;top:351.76px;font-size:12.10px;line-height:12.10px;transform:scaleX(0.9091);transform-origin:0 0;">Провести</span>
<div style="left:519px;top:350px;width:1px;height:17px;background:linear-gradient(#fbf9ec,#bdb08a 30%,#bdb08a 70%,#fbf9ec)"></div>
<span class="t" style="left:525.5px;top:350.12px;font-size:9.90px;line-height:9.90px;transform:scaleX(0.9091);transform-origin:0 0;color:#2b62b0;font-weight:bold;letter-spacing:-0.3px">Дт</span>
<span class="t" style="left:531.5px;top:357.12px;font-size:9.90px;line-height:9.90px;transform:scaleX(0.9091);transform-origin:0 0;color:#c41a1a;font-weight:bold;letter-spacing:-0.3px">Кт</span>
<span class="t" style="left:1092px;top:351.76px;font-size:12.10px;line-height:12.10px;transform:scaleX(0.9091);transform-origin:0 0;">Все действия</span>
<svg style="left:1164px;top:358px" width="6" height="4"><path d="M0 0 H6 L3 3.5Z" fill="#4a3a18"/></svg>
<svg style="left:1179px;top:350px" width="16" height="16"><circle cx="8" cy="8" r="7.2" fill="url(#helpg)" stroke="#857565" stroke-width="1"/><text x="8" y="12" text-anchor="middle" font-family="Liberation Sans" font-size="11.5" fill="#7a4424">?</text></svg>
<span class="t" style="left:278px;top:380.76px;font-size:12.10px;line-height:12.10px;transform:scaleX(0.9091);transform-origin:0 0;">Номер:</span>
<div class="fld" style="left:462px;top:377px;width:94px;height:17px;background:#fdfcf6"></div>
<span class="t" style="left:465px;top:380.76px;font-size:12.10px;line-height:12.10px;transform:scaleX(0.9091);transform-origin:0 0;">000000013</span>
<span class="t" style="left:567.5px;top:380.76px;font-size:12.10px;line-height:12.10px;transform:scaleX(0.9091);transform-origin:0 0;">Дата:</span>
<div class="fld" style="left:598px;top:377px;width:142px;height:17px;background:#fff"></div>
<div class="fb" style="left:726px;top:378px;width:14px;height:17px;border-radius:0 2px 2px 0;"></div>
<svg style="left:729px;top:381px" width="10" height="11" shape-rendering="crispEdges"><rect x="3" y="0" width="4" height="3" fill="#6b4a12"/><rect x="6" y="0" width="4" height="3" fill="#6b4a12"/><rect x="0" y="2" width="4" height="3" fill="#6b4a12"/><rect x="3" y="2" width="4" height="3" fill="#6b4a12"/><rect x="6" y="2" width="4" height="3" fill="#6b4a12"/><rect x="0" y="4" width="4" height="3" fill="#6b4a12"/><rect x="3" y="4" width="4" height="3" fill="#6b4a12"/><rect x="6" y="4" width="4" height="3" fill="#6b4a12"/><rect x="0" y="6" width="4" height="3" fill="#6b4a12"/><rect x="3" y="6" width="4" height="3" fill="#6b4a12"/><rect x="6" y="6" width="4" height="3" fill="#6b4a12"/><rect x="0" y="8" width="4" height="3" fill="#6b4a12"/><rect x="3" y="8" width="4" height="3" fill="#6b4a12"/><rect x="4" y="1" width="2" height="1" fill="#fff"/><rect x="7" y="1" width="2" height="1" fill="#fff"/><rect x="1" y="3" width="2" height="1" fill="#fff"/><rect x="4" y="3" width="2" height="1" fill="#fff"/><rect x="7" y="3" width="2" height="1" fill="#fff"/><rect x="1" y="5" width="2" height="1" fill="#fff"/><rect x="4" y="5" width="2" height="1" fill="#fff"/><rect x="7" y="5" width="2" height="1" fill="#fff"/><rect x="1" y="7" width="2" height="1" fill="#fff"/><rect x="4" y="7" width="2" height="1" fill="#fff"/><rect x="7" y="7" width="2" height="1" fill="#fff"/><rect x="1" y="9" width="2" height="1" fill="#fff"/><rect x="4" y="9" width="2" height="1" fill="#fff"/></svg>
<div style="left:601px;top:380px;width:99px;height:13px;background:#5577cc"></div>
<span class="t" style="left:602px;top:380.76px;font-size:12.10px;line-height:12.10px;transform:scaleX(0.9091);transform-origin:0 0;color:#fff">29.05.2018 12:12:10</span>
<span class="t" style="left:750px;top:380.76px;font-size:12.10px;line-height:12.10px;transform:scaleX(0.9091);transform-origin:0 0;">Учреждение:</span>
<div class="fld" style="left:822px;top:377px;width:374px;height:17px;background:#fff"></div>
<div class="fb" style="left:1182px;top:378px;width:14px;height:17px;border-radius:0 2px 2px 0;"></div>
<svg style="left:1183px;top:378px" width="15" height="17"><circle cx="6.5" cy="7" r="3.5" fill="none" stroke="#6b4a12" stroke-width="1.3"/><path d="M9.2 9.7 L11.6 12.1" stroke="#6b4a12" stroke-width="2" stroke-linecap="round"/></svg>
<div class="fb" style="left:1167px;top:378px;width:14px;height:17px;"></div>
<div style="left:1170px;top:390px;width:2px;height:2px;background:#6b4a12;box-shadow:4px 0 #6b4a12,8px 0 #6b4a12"></div>
<span class="t" style="left:825px;top:380.76px;font-size:12.10px;line-height:12.10px;transform:scaleX(0.9091);transform-origin:0 0;">ГБУЗ СГКБ №1 им. Н.И. Пирогова</span>
<span class="t" style="left:278px;top:407.76px;font-size:12.10px;line-height:12.10px;transform:scaleX(0.9091);transform-origin:0 0;">Вид операции:</span>
<div class="radio" style="left:462px;top:402px;width:302px;height:19px"></div>
<div style="left:678px;top:403px;width:87px;height:19px;background:linear-gradient(#f2dfb0,#e6c98a);border-radius:0 2px 2px 0"></div>
<div style="left:565px;top:403px;width:1px;height:19px;background:#bab08a"></div>
<div style="left:677px;top:403px;width:1px;height:19px;background:#bab08a"></div>
<span class="t" style="left:470px;top:406.76px;font-size:12.10px;line-height:12.10px;transform:scaleX(0.9091);transform-origin:0 0;">Поступление</span>
<span class="t" style="left:574px;top:406.76px;font-size:12.10px;line-height:12.10px;transform:scaleX(0.9091);transform-origin:0 0;">Перемещение</span>
<span class="t" style="left:684px;top:406.76px;font-size:12.10px;line-height:12.10px;transform:scaleX(0.9091);transform-origin:0 0;">Списание</span>
<div class="dot" style="left:552px;top:410px"></div>
<div class="dot" style="left:664px;top:410px"></div>
<div class="dot" style="left:752px;top:410px;background:#2f9a3f"></div>
<span class="t" style="left:278px;top:432.76px;font-size:12.10px;line-height:12.10px;transform:scaleX(0.9091);transform-origin:0 0;">МОЛ/Подразделение отправитель:</span>
<div class="fld" style="left:462px;top:429px;width:208px;height:17px;background:#fff"></div>
<div class="fb" style="left:656px;top:430px;width:14px;height:17px;border-radius:0 2px 2px 0;"></div>
<svg style="left:657px;top:430px" width="15" height="17"><circle cx="6.5" cy="7" r="3.5" fill="none" stroke="#6b4a12" stroke-width="1.3"/><path d="M9.2 9.7 L11.6 12.1" stroke="#6b4a12" stroke-width="2" stroke-linecap="round"/></svg>
<div class="fb" style="left:641px;top:430px;width:14px;height:17px;"></div>
<div style="left:644px;top:442px;width:2px;height:2px;background:#6b4a12;box-shadow:4px 0 #6b4a12,8px 0 #6b4a12"></div>
<span class="t" style="left:465px;top:432.76px;font-size:12.10px;line-height:12.10px;transform:scaleX(0.9091);transform-origin:0 0;">АПТЕКА</span>
<span class="t" style="left:680px;top:432.76px;font-size:12.10px;line-height:12.10px;transform:scaleX(0.9091);transform-origin:0 0;">Номер первичного документа:</span>
<div class="fld" style="left:840px;top:429px;width:356px;height:17px;background:#fff"></div>
<span class="t" style="left:680px;top:457.76px;font-size:12.10px;line-height:12.10px;transform:scaleX(0.9091);transform-origin:0 0;">Вид первичного документа:</span>
<div class="fld" style="left:840px;top:454px;width:356px;height:17px;background:#fff"></div>
<span class="t" style="left:680px;top:482.76px;font-size:12.10px;line-height:12.10px;transform:scaleX(0.9091);transform-origin:0 0;">Дата первичного документа:</span>
<div class="fld" style="left:840px;top:479px;width:94px;height:17px;background:#fff"></div>
<div class="fb" style="left:920px;top:480px;width:14px;height:17px;border-radius:0 2px 2px 0;"></div>
<svg style="left:923px;top:483px" width="10" height="11" shape-rendering="crispEdges"><rect x="3" y="0" width="4" height="3" fill="#6b4a12"/><rect x="6" y="0" width="4" height="3" fill="#6b4a12"/><rect x="0" y="2" width="4" height="3" fill="#6b4a12"/><rect x="3" y="2" width="4" height="3" fill="#6b4a12"/><rect x="6" y="2" width="4" height="3" fill="#6b4a12"/><rect x="0" y="4" width="4" height="3" fill="#6b4a12"/><rect x="3" y="4" width="4" height="3" fill="#6b4a12"/><rect x="6" y="4" width="4" height="3" fill="#6b4a12"/><rect x="0" y="6" width="4" height="3" fill="#6b4a12"/><rect x="3" y="6" width="4" height="3" fill="#6b4a12"/><rect x="6" y="6" width="4" height="3" fill="#6b4a12"/><rect x="0" y="8" width="4" height="3" fill="#6b4a12"/><rect x="3" y="8" width="4" height="3" fill="#6b4a12"/><rect x="4" y="1" width="2" height="1" fill="#fff"/><rect x="7" y="1" width="2" height="1" fill="#fff"/><rect x="1" y="3" width="2" height="1" fill="#fff"/><rect x="4" y="3" width="2" height="1" fill="#fff"/><rect x="7" y="3" width="2" height="1" fill="#fff"/><rect x="1" y="5" width="2" height="1" fill="#fff"/><rect x="4" y="5" width="2" height="1" fill="#fff"/><rect x="7" y="5" width="2" height="1" fill="#fff"/><rect x="1" y="7" width="2" height="1" fill="#fff"/><rect x="4" y="7" width="2" height="1" fill="#fff"/><rect x="7" y="7" width="2" height="1" fill="#fff"/><rect x="1" y="9" width="2" height="1" fill="#fff"/><rect x="4" y="9" width="2" height="1" fill="#fff"/></svg>
<span class="t" style="left:843px;top:482.76px;font-size:12.10px;line-height:12.10px;transform:scaleX(0.9091);transform-origin:0 0;">&nbsp;.&nbsp;&nbsp;.</span>
<svg style="left:281px;top:508px" width="16" height="16"><circle cx="8" cy="8" r="7.3" fill="url(#addg)" stroke="#5c8a4a" stroke-width="0.8"/><path d="M8 4 V12 M4 8 H12" stroke="#fff" stroke-width="2.4"/></svg>
<span class="t" style="left:299px;top:509.76px;font-size:12.10px;line-height:12.10px;transform:scaleX(0.9091);transform-origin:0 0;">Добавить</span>
<div style="left:354px;top:507px;width:1px;height:19px;background:linear-gradient(#fbf9ec,#bdb08a 30%,#bdb08a 70%,#fbf9ec)"></div>
<svg style="left:361px;top:509px" width="16" height="16"><path d="M1.5 0.5 H8 L11.5 4 V14.5 H1.5Z" fill="#f4f8fb" stroke="#8ea3b8"/><path d="M8 0.5 V4 H11.5" fill="#dfe8f0" stroke="#8ea3b8" stroke-width="0.8"/><path d="M3.5 4 H7 M3.5 6 H9 M3.5 8 H8 M3.5 10 H7" stroke="#9fb0c0" stroke-width="0.9"/><circle cx="11.3" cy="11.5" r="4.1" fill="url(#addg)" stroke="#5c8a4a" stroke-width="0.7"/><path d="M11.3 9.2 V13.8 M9 11.5 H13.6" stroke="#fff" stroke-width="1.5"/></svg>
<svg style="left:387px;top:510px" width="13" height="13"><path d="M2 2 L11 11 M11 2 L2 11" stroke="#f3a89c" stroke-width="3.2" stroke-linecap="round"/><path d="M2 2 L11 11 M11 2 L2 11" stroke="#e0584a" stroke-width="1.8" stroke-linecap="round"/></svg>
<div style="left:407px;top:507px;width:1px;height:19px;background:linear-gradient(#fbf9ec,#bdb08a 30%,#bdb08a 70%,#fbf9ec)"></div>
<svg style="left:414px;top:509px" width="14" height="14"><path d="M7 1 L13 7 H9.5 V12.5 H4.5 V7 H1 Z" fill="url(#arrg)" stroke="#3f79b8" stroke-width="0.9"/></svg>
<svg style="left:439px;top:509px" width="14" height="14"><path d="M7 13 L13 7 H9.5 V1.5 H4.5 V7 H1 Z" fill="url(#arrg)" stroke="#3f79b8" stroke-width="0.9"/></svg>
<span class="t" style="left:1117px;top:509.76px;font-size:12.10px;line-height:12.10px;transform:scaleX(0.9091);transform-origin:0 0;">Все действия</span>
<svg style="left:1189px;top:516px" width="6" height="4"><path d="M0 0 H6 L3 3.5Z" fill="#4a3a18"/></svg>
<div style="left:278px;top:534px;width:918px;height:135px;background:#fff;border:1px solid #bab08a"></div>
<div style="left:279px;top:535px;width:918px;height:20px;background:linear-gradient(#fbf6e4,#efe5c4)"></div>
<div style="left:279px;top:555px;width:918px;height:1px;background:#d8cca6"></div>
<div style="left:279px;top:556px;width:918px;height:18px;background:#c6dff9"></div>
<div style="left:279px;top:556px;width:47px;height:18px;background:#6e99cf"></div>
<div style="left:326px;top:535px;width:1px;height:20px;background:#d8cca6"></div>
<div style="left:326px;top:556px;width:1px;height:18px;background:#a9c3df"></div>
<div style="left:528px;top:535px;width:1px;height:20px;background:#d8cca6"></div>
<div style="left:528px;top:556px;width:1px;height:18px;background:#a9c3df"></div>
<div style="left:730px;top:535px;width:1px;height:20px;background:#d8cca6"></div>
<div style="left:730px;top:556px;width:1px;height:18px;background:#a9c3df"></div>
<div style="left:858px;top:535px;width:1px;height:20px;background:#d8cca6"></div>
<div style="left:858px;top:556px;width:1px;height:18px;background:#a9c3df"></div>
<div style="left:994px;top:535px;width:1px;height:20px;background:#d8cca6"></div>
<div style="left:994px;top:556px;width:1px;height:18px;background:#a9c3df"></div>
<span class="t" style="left:283px;top:538.76px;font-size:12.10px;line-height:12.10px;transform:scaleX(0.9091);transform-origin:0 0;">N</span>
<span class="t" style="left:331px;top:538.76px;font-size:12.10px;line-height:12.10px;transform:scaleX(0.9091);transform-origin:0 0;">КФО</span>
<span class="t" style="left:533px;top:538.76px;font-size:12.10px;line-height:12.10px;transform:scaleX(0.9091);transform-origin:0 0;">Номенклатура</span>
<span class="t" style="left:735px;top:538.76px;font-size:12.10px;line-height:12.10px;transform:scaleX(0.9091);transform-origin:0 0;">Количество</span>
<span class="t" style="left:862px;top:538.76px;font-size:12.10px;line-height:12.10px;transform:scaleX(0.9091);transform-origin:0 0;">Сумма</span>
<span class="t" style="left:999px;top:538.76px;font-size:12.10px;line-height:12.10px;transform:scaleX(0.9091);transform-origin:0 0;">Контрагент</span>
<span class="t" style="right:955px;top:559.76px;font-size:12.10px;line-height:12.10px;transform:scaleX(0.9091);transform-origin:100% 0;color:#fff">1</span>
<span class="t" style="left:331px;top:559.76px;font-size:12.10px;line-height:12.10px;transform:scaleX(0.9091);transform-origin:0 0;">4</span>
<span class="t" style="left:533px;top:559.76px;font-size:12.10px;line-height:12.10px;transform:scaleX(0.9091);transform-origin:0 0;">Норадреналин Агетан конц.для р-ра...</span>
<span class="t" style="right:422px;top:559.76px;font-size:12.10px;line-height:12.10px;transform:scaleX(0.9091);transform-origin:100% 0;">5,000</span>
<span class="t" style="right:286px;top:559.76px;font-size:12.10px;line-height:12.10px;transform:scaleX(0.9091);transform-origin:100% 0;">7 102,34</span>
<span class="t" style="left:278px;top:680.76px;font-size:12.10px;line-height:12.10px;transform:scaleX(0.9091);transform-origin:0 0;">Комментарий:</span>
<div class="fld" style="left:462px;top:677px;width:494px;height:17px;background:#fff"></div>
<span class="t" style="left:465px;top:680.76px;font-size:12.10px;line-height:12.10px;transform:scaleX(0.9091);transform-origin:0 0;">#Изменен 29.05.2018 16:01:59.</span>
<span class="t" style="left:965px;top:680.76px;font-size:12.10px;line-height:12.10px;transform:scaleX(0.9091);transform-origin:0 0;">Сумма документа:</span>
<div class="fld" style="left:1062px;top:677px;width:134px;height:17px;background:#fff"></div>
<span class="t" style="right:81px;top:680.76px;font-size:12.10px;line-height:12.10px;transform:scaleX(0.9091);transform-origin:100% 0;">7 102,34</span>
<svg style="left:0;top:0" width="1276" height="782"><rect x="107.75" y="336" width="81.5" height="129.25" fill="none" stroke="#3b0a84" stroke-width="3.3" stroke-linejoin="round"/><rect x="105.75" y="425.75" width="36.5" height="23.5" fill="none" stroke="#3b0a84" stroke-width="3.3" stroke-linejoin="round"/><path d="M179 450 L282 558" stroke="#3b0a84" stroke-width="3.5"/><path d="M287 563 L273 556 L282 549.5Z" fill="#3b0a84"/><rect x="137.75" y="723.25" width="1023" height="55.5" fill="none" stroke="#3b0a84" stroke-width="3.3" stroke-linejoin="round"/></svg></body></html>
